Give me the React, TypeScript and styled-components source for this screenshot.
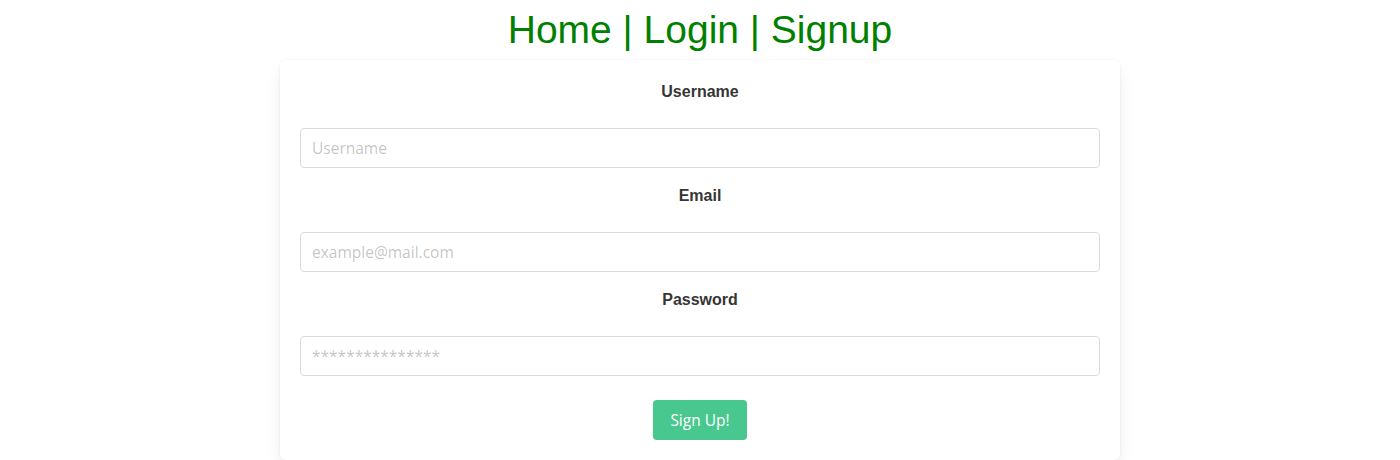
import React from 'react';
import styled, { createGlobalStyle } from 'styled-components';

const GlobalStyle = createGlobalStyle`
  html, body {
    margin: 0;
    padding: 0;
    background: #fff;
  }
  body {
    font-family: "Liberation Sans", Arial, sans-serif;
    line-height: 1.5;
    color: #363636;
  }
  * {
    box-sizing: border-box;
  }
`;

const Nav = styled.div`
  text-align: center;
  font-size: 39px;
  line-height: 60px;
  color: #008000;
`;

const Box = styled.div`
  width: 840px;
  margin: 0 auto;
  padding: 20px;
  background: #fff;
  border-radius: 6px;
  box-shadow: 0 0.5em 1em -0.125em rgba(10, 10, 10, 0.1),
    0 0 0 1px rgba(10, 10, 10, 0.02);
`;

const Form = styled.form`
  display: flex;
  flex-direction: column;
  gap: 16px;
`;

const Field = styled.div`
  display: flex;
  flex-direction: column;
  gap: 24px;
`;

const Label = styled.label`
  display: block;
  text-align: center;
  font-weight: 700;
  font-size: 16px;
  line-height: 24px;
  color: #363636;
`;

const Input = styled.input`
  width: 100%;
  height: 40px;
  padding: 0 11px;
  border: 1px solid #dbdbdb;
  border-radius: 4px;
  font-family: "Open Sans", "Noto Sans", sans-serif;
  font-size: 15.5px;
  color: #363636;
  outline: none;
  &::placeholder {
    color: rgba(54, 54, 54, 0.3);
  }
`;

const Actions = styled.div`
  display: flex;
  justify-content: center;
  padding-top: 8px;
`;

const Button = styled.button`
  height: 40px;
  padding: 0 16px;
  border: 1px solid transparent;
  border-radius: 4px;
  background: #48c78e;
  color: #fff;
  font-family: "Open Sans", "Noto Sans", sans-serif;
  font-size: 15.5px;
  cursor: pointer;
`;

const App = () => {
  return (
    <>
      <GlobalStyle />
      <Nav>Home | Login | Signup</Nav>
      <Box>
        <Form onSubmit={(e) => e.preventDefault()}>
          <Field>
            <Label>Username</Label>
            <Input type="text" placeholder="Username" />
          </Field>
          <Field>
            <Label>Email</Label>
            <Input type="email" placeholder="example@mail.com" />
          </Field>
          <Field>
            <Label>Password</Label>
            <Input type="text" placeholder="***************" />
          </Field>
          <Actions>
            <Button type="submit">Sign Up!</Button>
          </Actions>
        </Form>
      </Box>
    </>
  );
};

export default App;
